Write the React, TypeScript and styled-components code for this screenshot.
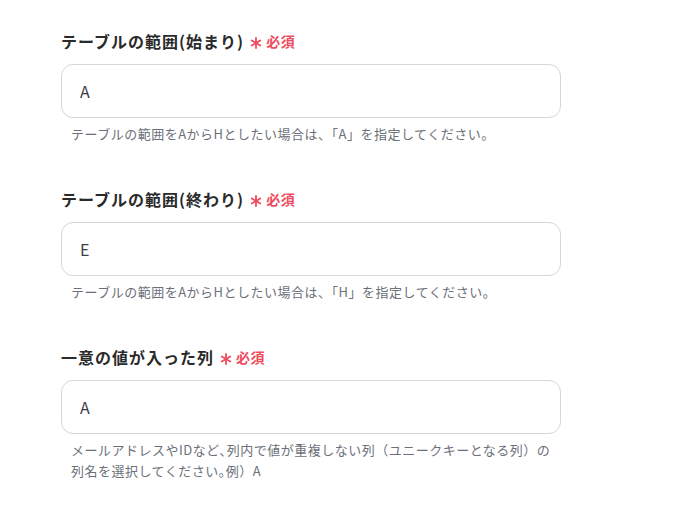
import React from "react";
import styled, { createGlobalStyle } from "styled-components";

interface Field {
  label: string;
  value: string;
  help: string;
}

const fields: Field[] = [
  {
    label: "テーブルの範囲(始まり)",
    value: "A",
    help: "テーブルの範囲をAからHとしたい場合は、「A」を指定してください。",
  },
  {
    label: "テーブルの範囲(終わり)",
    value: "E",
    help: "テーブルの範囲をAからHとしたい場合は、「H」を指定してください。",
  },
  {
    label: "一意の値が入った列",
    value: "A",
    help: "メールアドレスやIDなど､列内で値が重複しない列（ユニークキーとなる列）の列名を選択してください｡例）A",
  },
];

const RequiredMark = () => (
  <AsteriskIcon viewBox="0 0 12 12">
    <g stroke="currentColor" strokeWidth="1.8" strokeLinecap="round">
      <line x1="6" y1="1" x2="6" y2="11" />
      <line x1="1.7" y1="3.5" x2="10.3" y2="8.5" />
      <line x1="1.7" y1="8.5" x2="10.3" y2="3.5" />
    </g>
  </AsteriskIcon>
);

export default function App() {
  return (
    <>
      <GlobalStyle />
      <Form>
        {fields.map((field, index) => (
          <FieldBlock key={index}>
            <LabelRow>
              <LabelText>{field.label}</LabelText>
              <Required>
                <RequiredMark />
                <span>必須</span>
              </Required>
            </LabelRow>
            <Input defaultValue={field.value} />
            <HelpText>{field.help}</HelpText>
          </FieldBlock>
        ))}
      </Form>
    </>
  );
}

const GlobalStyle = createGlobalStyle`
  body {
    margin: 0;
    background: #ffffff;
    font-family: "Noto Sans CJK JP", "Noto Sans", sans-serif;
  }
`;

const Form = styled.div`
  display: flex;
  flex-direction: column;
  gap: 43px;
  padding: 29px 0 0 61px;
  width: 500px;
`;

const FieldBlock = styled.div`
  display: flex;
  flex-direction: column;
`;

const LabelRow = styled.div`
  display: flex;
  align-items: center;
  gap: 6px;
  height: 24px;
  margin-bottom: 11px;
`;

const LabelText = styled.div`
  color: #2a2a2a;
  font-size: 16px;
  font-weight: 700;
  line-height: 24px;
  letter-spacing: 1px;
`;

const Required = styled.div`
  display: flex;
  align-items: center;
  gap: 4px;
  color: #ee4d5f;
  font-size: 14px;
  font-weight: 700;
  line-height: 20px;
  letter-spacing: 0.5px;
`;

const AsteriskIcon = styled.svg`
  width: 12px;
  height: 12px;
  margin-top: 3px;
`;

const Input = styled.input`
  box-sizing: border-box;
  width: 500px;
  height: 54px;
  padding: 0 18px;
  border: 1px solid #d3d6db;
  border-radius: 12px;
  background: #fff;
  color: #3b4048;
  font-family: "Noto Sans CJK JP", "Noto Sans", sans-serif;
  font-size: 16px;
  outline: none;
`;

const HelpText = styled.div`
  margin-top: 5px;
  padding: 0 10px;
  color: #6b7079;
  font-size: 13px;
  line-height: 21px;
  letter-spacing: 0.5px;
`;
